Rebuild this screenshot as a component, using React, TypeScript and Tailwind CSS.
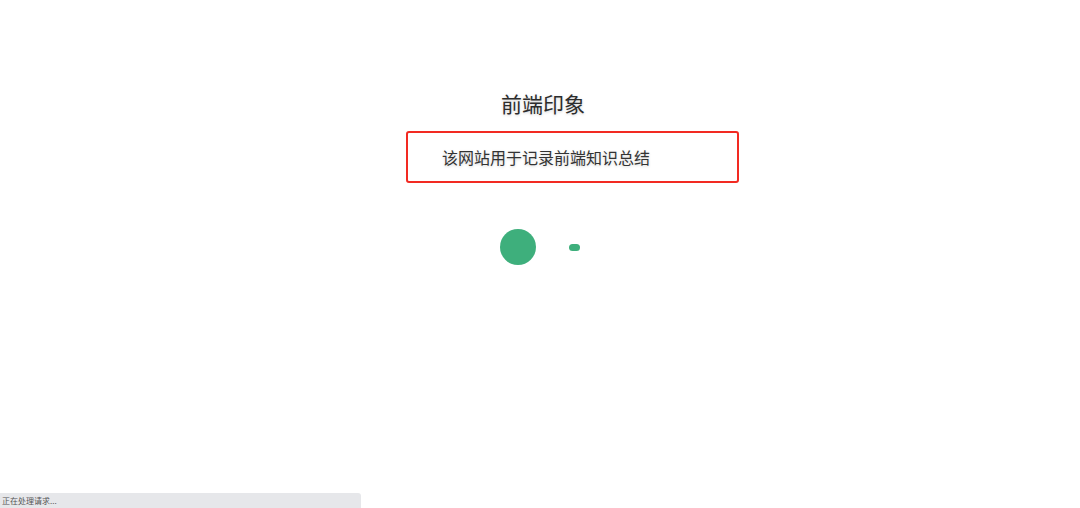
import React from "react";

const cjk = { fontFamily: '"Noto Sans CJK SC", "Noto Sans", sans-serif' };

export default function App() {
  return (
    <div className="relative w-[1080px] h-[508px] bg-white overflow-hidden" style={cjk}>
      <div className="flex flex-col pt-[90px]">
        <h1 className="ml-[501px] text-[21px] leading-[26px] text-[#2c2c2c] [text-shadow:0_1px_3px_rgba(0,0,0,0.18)]">
          前端印象
        </h1>
        <div className="ml-[406px] mt-[15px] w-[333px] h-[52px] border-2 border-[#f22a22] rounded-[3px] flex items-center pl-[34px]">
          <p className="text-[16px] leading-[22px] text-[#333] [text-shadow:0_1px_3px_rgba(0,0,0,0.18)]">
            该网站用于记录前端知识总结
          </p>
        </div>
        <div className="ml-[500px] mt-[46px] flex items-center gap-[33px]">
          <div className="w-[36px] h-[36px] rounded-full bg-[#3eaf7c]" />
          <div className="w-[11px] h-[7px] rounded-full bg-[#3eaf7c]" />
        </div>
      </div>
      <div className="absolute left-0 bottom-0 w-[361px] h-[15px] bg-[#e6e7ea] rounded-tr-[3px] pl-[2px] flex items-center">
        <span className="text-[8px] leading-none text-[#555]">正在处理请求...</span>
      </div>
    </div>
  );
}
